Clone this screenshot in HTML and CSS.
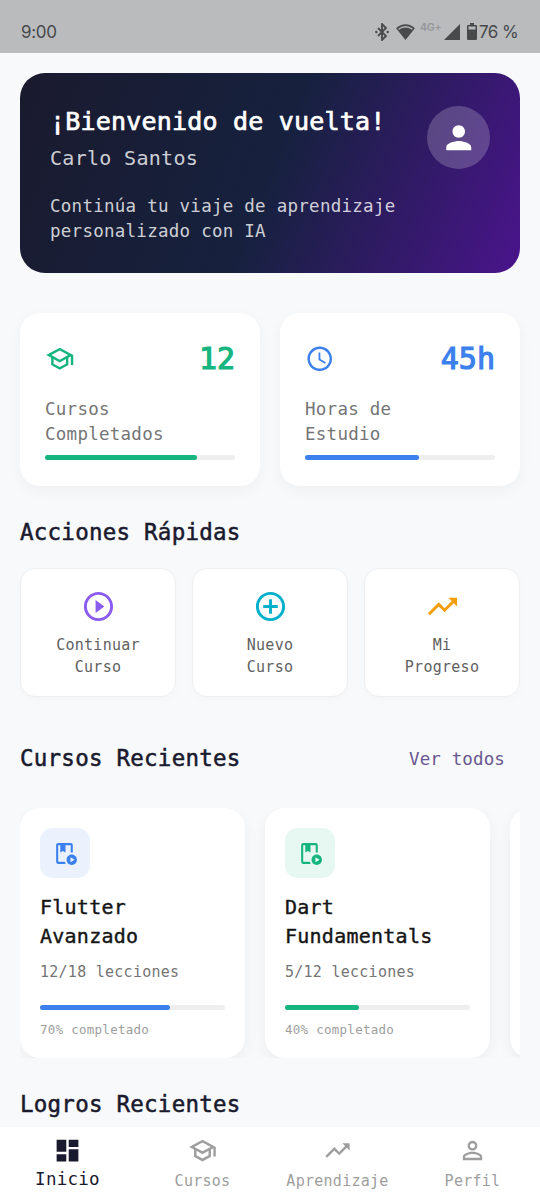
FILE: index.html
```html
<!doctype html>
<html lang="es">
<head>
<meta charset="UTF-8">
<title>Inicio</title>
<link rel="stylesheet" href="styles.css">
</head>

<body>

<!-- shared icons -->
<svg class="icon-defs">
   <symbol id="school" viewBox="0 0 24 24"><path d="M12 3L1 9l4 2.18v6L12 21l7-3.82v-6l2-1.09V17h2V9L12 3zm6.82 6L12 12.72 5.18 9 12 5.28 18.82 9zM17 15.99l-5 2.73-5-2.73v-3.72L12 15l5-2.73v3.72z"/></symbol>
   <symbol id="trending" viewBox="0 0 24 24"><path d="M16 6l2.29 2.29-4.88 4.88-4-4L2 16.59 3.41 18l6-6 4 4 6.3-6.29L22 12V6z"/></symbol>
   <symbol id="lesson" viewBox="0 0 24 24"><path d="M5 20V4h2v7l2.5-1.5L12 11V4h5v7.08c.33-.05.66-.08 1-.08s.67.03 1 .08V4c0-1.1-.9-2-2-2H5C3.9 2 3 2.9 3 4v16c0 1.1.9 2 2 2h7.26c-.42-.6-.75-1.28-.97-2H5zM18 13c-2.76 0-5 2.24-5 5s2.24 5 5 5 5-2.24 5-5-2.24-5-5-5zM16.75 20.5v-5l4 2.5-4 2.5z"/></symbol>
</svg>

<div class="status-bar">
   <span class="clock">9:00</span>
   <div class="status-icons">
      <svg class="bluetooth" viewBox="0 0 14 18"><path d="M3 5l8 8-4 4V1l4 4-8 8" fill="none" stroke="currentColor" stroke-width="1.8"/><circle cx="1.3" cy="9" r="1.2"/><circle cx="12.7" cy="9" r="1.2"/></svg>
      <svg class="wifi" viewBox="0 0 20 17"><path d="M10 17L0 4.5Q4.5 .3 10 .3T20 4.5z"/><path d="M2.6 5.6Q10 .2 17.4 5.6" fill="none" stroke="#babbbd" stroke-width="1.5"/></svg>
      <span class="network">4G+</span>
      <svg class="signal" viewBox="0 0 16 16"><path d="M0 16L16 0v16z"/></svg>
      <svg class="battery" viewBox="0 0 10 17"><path d="M3 0h4v2h2q1 0 1 1v13q0 1-1 1H1q-1 0-1-1V3q0-1 1-1h2zM1.500 3.500v3h7v-3z" fill-rule="evenodd"/></svg>
      <span class="percent">76 %</span>
   </div>
</div>

<div class="content">
   <div class="welcome">
      <div>
         <h1>¡Bienvenido de vuelta!</h1>
         <p class="user-name">Carlo Santos</p>
         <p class="tagline">Continúa tu viaje de aprendizaje<br>personalizado con IA</p>
      </div>
      <div class="avatar">
         <svg viewBox="0 0 24 24"><path d="M12 12c2.21 0 4-1.79 4-4s-1.79-4-4-4-4 1.79-4 4 1.79 4 4 4zm0 2c-2.67 0-8 1.34-8 4v2h16v-2c0-2.66-5.33-4-8-4z"/></svg>
      </div>
   </div>

   <div class="stats">
      <div class="stat green">
         <div class="stat-top">
            <svg><use href="#school"/></svg>
            <span>12</span>
         </div>
         <p>Cursos<br>Completados</p>
         <div class="bar"><div style="width: 80%"></div></div>
      </div>
      <div class="stat blue">
         <div class="stat-top">
            <svg viewBox="0 0 24 24"><path d="M11.99 2C6.47 2 2 6.48 2 12s4.47 10 9.99 10C17.52 22 22 17.52 22 12S17.52 2 11.99 2zM12 20c-4.42 0-8-3.58-8-8s3.58-8 8-8 8 3.58 8 8-3.58 8-8 8zm.5-13H11v6l5.25 3.15.75-1.23-4.5-2.67z"/></svg>
            <span>45h</span>
         </div>
         <p>Horas de<br>Estudio</p>
         <div class="bar"><div style="width: 60%"></div></div>
      </div>
   </div>

   <h2>Acciones Rápidas</h2>
   <div class="actions">
      <div class="action">
         <svg class="purple" viewBox="0 0 24 24"><path d="M10 16.5l6-4.5-6-4.5v9zM12 2C6.48 2 2 6.48 2 12s4.48 10 10 10 10-4.48 10-10S17.52 2 12 2zm0 18c-4.41 0-8-3.59-8-8s3.59-8 8-8 8 3.59 8 8-3.59 8-8 8z"/></svg>
         <p>Continuar<br>Curso</p>
      </div>
      <div class="action">
         <svg class="cyan" viewBox="0 0 24 24"><path d="M13 7h-2v4H7v2h4v4h2v-4h4v-2h-4V7zm-1-5C6.48 2 2 6.48 2 12s4.48 10 10 10 10-4.48 10-10S17.52 2 12 2zm0 18c-4.41 0-8-3.59-8-8s3.59-8 8-8 8 3.59 8 8-3.59 8-8 8z"/></svg>
         <p>Nuevo<br>Curso</p>
      </div>
      <div class="action">
         <svg class="orange"><use href="#trending"/></svg>
         <p>Mi<br>Progreso</p>
      </div>
   </div>

   <div class="section-head">
      <h2>Cursos Recientes</h2>
      <a>Ver todos</a>
   </div>
   <div class="courses">
      <div class="course blue">
         <div class="course-icon"><svg><use href="#lesson"/></svg></div>
         <h3>Flutter<br>Avanzado</h3>
         <p class="lessons">12/18 lecciones</p>
         <div class="bar"><div style="width: 70%"></div></div>
         <p class="done">70% completado</p>
      </div>
      <div class="course green">
         <div class="course-icon"><svg><use href="#lesson"/></svg></div>
         <h3>Dart<br>Fundamentals</h3>
         <p class="lessons">5/12 lecciones</p>
         <div class="bar"><div style="width: 40%"></div></div>
         <p class="done">40% completado</p>
      </div>
      <div class="course"></div>
   </div>

   <h2>Logros Recientes</h2>
</div>

<div class="nav">
   <a class="active">
      <svg viewBox="0 0 24 24"><path d="M3 13h8V3H3v10zm0 8h8v-6H3v6zm10 0h8V11h-8v10zm0-18v6h8V3h-8z"/></svg>
      <span>Inicio</span>
   </a>
   <a>
      <svg><use href="#school"/></svg>
      <span>Cursos</span>
   </a>
   <a>
      <svg><use href="#trending"/></svg>
      <span>Aprendizaje</span>
   </a>
   <a>
      <svg viewBox="0 0 24 24"><path d="M12 5.9c1.16 0 2.1.94 2.1 2.1s-.94 2.1-2.1 2.1S9.9 9.16 9.9 8s.94-2.1 2.1-2.1m0 9c2.97 0 6.1 1.46 6.1 2.1v1.1H5.9V17c0-.64 3.13-2.1 6.1-2.1M12 4C9.79 4 8 5.79 8 8s1.79 4 4 4 4-1.79 4-4-1.79-4-4-4zm0 9c-2.67 0-8 1.34-8 4v3h16v-3c0-2.66-5.33-4-8-4z"/></svg>
      <span>Perfil</span>
   </a>
</div>

</body>
</html>
```

FILE: styles.css
```css
body, div, h1, h2, h3, p, a {
   margin: 0;
   padding: 0;
   box-sizing: border-box;
}

body {
   display: flex;
   flex-direction: column;
   height: 1200px;
   overflow: hidden;
   background: #f8f9fb;
   font-family: "DejaVu Sans Mono", monospace;
   color: #1a1a2e;
}

svg {
   display: block;
   fill: currentColor;
}

h1, h2, h3 {
   font-weight: normal;
}

.icon-defs {
   display: none;
}

/* status bar */
.status-bar {
   display: flex;
   justify-content: space-between;
   flex: none;
   height: 53px;
   padding: 20px 22px 0 21px;
   background: #babbbd;
   color: #47494b;
   font-family: Inter, sans-serif;
   font-size: 17px;
   line-height: 23px;
}

.status-icons {
   display: flex;
   align-items: center;
}

.status-icons, .clock {
   height: 23px;
}

.clock {
   padding-top: 1px;
   letter-spacing: -0.3px;
}

.bluetooth {
   width: 14px;
   height: 18px;
   margin-right: 7px;
}

.wifi {
   width: 19px;
   height: 16px;
   margin-right: 5px;
}

.network {
   width: 20px;
   margin-right: 4px;
   padding-bottom: 8px;
   color: #949597;
   font-size: 10.5px;
   font-weight: 600;
   line-height: 15px;
   letter-spacing: -0.2px;
}

.signal {
   width: 16px;
   height: 16px;
   margin-right: 7px;
}

.battery {
   width: 10px;
   height: 17px;
   margin-right: 2px;
}

.percent {
   width: 39px;
   padding-top: 1px;
   white-space: nowrap;
   letter-spacing: -0.6px;
}

.content {
   flex: 1;
   min-height: 0;
   padding: 20px 20px 0;
   overflow: hidden;
}

/* welcome card */
.welcome {
   display: flex;
   justify-content: space-between;
   height: 200px;
   padding: 30px;
   border-radius: 25px;
   background: linear-gradient(111.8deg, #1a1a2e, #16213e 50%, #4a148c);
   color: #fff;
   white-space: nowrap;
}

.welcome h1 {
   padding-top: 1px;
   font-size: 25px;
   line-height: 36px;
   letter-spacing: 0.2px;
   -webkit-text-stroke: 0.7px;
}

.user-name {
   margin-top: 5px;
   color: rgba(255, 255, 255, 0.8);
   font-size: 20px;
   line-height: 26px;
   letter-spacing: 0.3px;
}

.tagline {
   margin-top: 23px;
   color: rgba(255, 255, 255, 0.8);
   font-size: 17.5px;
   line-height: 25px;
   letter-spacing: 0.26px;
}

.avatar {
   display: flex;
   align-items: center;
   justify-content: center;
   flex: none;
   width: 63px;
   height: 63px;
   margin-top: 3px;
   border-radius: 50%;
   background: rgba(255, 255, 255, 0.2);
}

.avatar svg {
   width: 37.5px;
   height: 37.5px;
}

/* stats */
.stats {
   display: flex;
   gap: 20px;
   margin: 40px 0 31px;
}

.stat {
   flex: 1;
   height: 172.5px;
   padding: 25px;
   border-radius: 20px;
   background: #fff;
   box-shadow: 0 5px 15px rgba(0, 0, 0, 0.04);
}

.stat-top {
   display: flex;
   align-items: center;
   justify-content: space-between;
}

.stat-top svg {
   width: 29.5px;
   height: 29.5px;
}

.stat-top span {
   font-size: 30px;
   line-height: 42px;
   -webkit-text-stroke: 1.2px;
}

.stat p {
   margin: 17px 0 8px;
   color: #757575;
   font-size: 17.5px;
   line-height: 25px;
   letter-spacing: 0.26px;
}

.green {
   color: #16b57f;
}

.blue {
   color: #3b80ec;
}

.bar {
   height: 5px;
   border-radius: 2.5px;
   background: #eee;
}

.bar div {
   height: 5px;
   border-radius: 2.5px;
   background: currentColor;
}

h2 {
   font-size: 22.5px;
   line-height: 30px;
   letter-spacing: 0.24px;
   -webkit-text-stroke: 0.5px;
}

/* quick actions */
.actions {
   display: flex;
   gap: 16px;
   margin: 21.5px 0 46px;
}

.action {
   display: flex;
   flex-direction: column;
   align-items: center;
   flex: 1;
   height: 129px;
   padding-top: 20px;
   border: 1px solid #eeeff1;
   border-radius: 15px;
   background: #fff;
   box-shadow: 0 3px 10px rgba(0, 0, 0, 0.02);
   text-align: center;
}

.action svg {
   width: 35px;
   height: 35px;
}

.action p {
   margin-top: 11px;
   color: #616161;
   font-size: 15px;
   line-height: 21.5px;
   letter-spacing: 0.27px;
}

.purple {
   color: #8b5cf0;
}

.cyan {
   color: #06b0cc;
}

.orange {
   color: #f59e0b;
}

.section-head {
   display: flex;
   align-items: center;
   justify-content: space-between;
   height: 30px;
   padding-right: 15px;
}

.section-head a {
   padding-top: 2px;
   color: #67588f;
   font-size: 17.5px;
   letter-spacing: 0.13px;
}

/* recent courses, scrolls sideways */
.courses {
   display: flex;
   gap: 20px;
   height: 250px;
   margin: 35px 0 31px;
   overflow: hidden;
}

.course {
   flex: none;
   width: 225px;
   padding: 20px;
   border-radius: 20px;
   background: #fff;
   box-shadow: 0 5px 15px rgba(0, 0, 0, 0.05);
}

.course-icon {
   display: flex;
   align-items: center;
   justify-content: center;
   width: 50px;
   height: 50px;
   margin-bottom: 15px;
   border-radius: 12.5px;
   background: #ebf2fe;
}

.green .course-icon {
   background: #e7f8f2;
}

.course-icon svg {
   width: 25px;
   height: 25px;
}

.course h3 {
   color: #151515;
   font-size: 20px;
   line-height: 28.5px;
   letter-spacing: 0.25px;
   -webkit-text-stroke: 0.4px;
}

.lessons {
   margin: 11.5px 0 21.5px;
   color: #757575;
   font-size: 15px;
   line-height: 21.5px;
   letter-spacing: 0.26px;
}

.done {
   margin-top: 11px;
   color: #9e9e9e;
   font-size: 12.5px;
   line-height: 18px;
   letter-spacing: 0.27px;
}

/* bottom navigation */
.nav {
   display: flex;
   flex: none;
   height: 73px;
   padding-top: 9px;
   background: #fff;
}

.nav a {
   display: flex;
   flex-direction: column;
   align-items: center;
   flex: 1;
   color: #9e9e9e;
   font-size: 15px;
   line-height: 22px;
   letter-spacing: 0.27px;
}

.nav svg {
   width: 29px;
   height: 29px;
   margin-bottom: 5px;
}

.nav .active {
   color: #1a1a2e;
   font-size: 17.5px;
}

.nav .active svg {
   margin-bottom: 3px;
}
```
